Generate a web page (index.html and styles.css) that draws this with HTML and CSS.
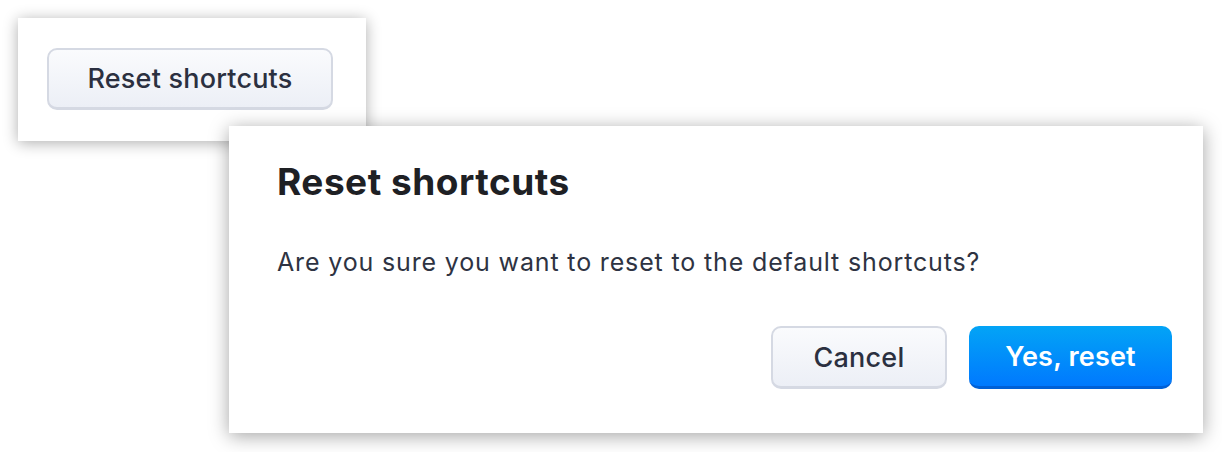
FILE: index.html
```html
<!DOCTYPE html>
<html lang="en">
<head>
    <meta charset="UTF-8">
    <title>Reset shortcuts</title>
    <link rel="stylesheet" href="styles.css">
</head>
<body>
    <!-- Carte avec le bouton -->
    <div class="card">
        <button class="btn btn-light btn-trigger">Reset shortcuts</button>
    </div>

    <!-- Boite de dialogue -->
    <div class="dialog">
        <h1 class="dialog-title">Reset shortcuts</h1>
        <p class="dialog-text">Are you sure you want to reset to the default shortcuts?</p>
        <div class="dialog-actions">
            <button class="btn btn-light btn-cancel">Cancel</button>
            <button class="btn btn-primary">Yes, reset</button>
        </div>
    </div>
</body>
</html>
```

FILE: styles.css
```css
/* Général */
body {
    margin: 0;
    background: #ffffff;
    font-family: Inter, "Open Sans", sans-serif;
    color: #2b3040;
    position: relative;
    width: 1222px;
    height: 452px;
    overflow: hidden;
}

/* Carte du haut */
.card {
    width: 348px;
    height: 123px;
    margin: 18px 0 0 18px;
    background: #ffffff;
    box-shadow: 0 2px 14px rgba(0, 0, 0, 0.32);
    box-sizing: border-box;
    padding: 30px 0 0 29px;
}

/* Boutons */
.btn {
    font-family: Inter, "Open Sans", sans-serif;
    font-size: 27px;
    font-weight: 500;
    border-radius: 10px;
    cursor: pointer;
    box-sizing: border-box;
    letter-spacing: 0.2px;
}

.btn-light {
    background: linear-gradient(#fafbfd, #eceff6);
    border: 2px solid #d5d9e3;
    border-bottom-width: 3px;
    color: #2b3040;
}

.btn-trigger {
    width: 286px;
    height: 62px;
    padding-bottom: 1px;
}

/* Dialogue */
.dialog {
    position: absolute;
    left: 229px;
    top: 126px;
    width: 974px;
    height: 307px;
    background: #ffffff;
    box-shadow: 0 3px 18px rgba(0, 0, 0, 0.36);
    box-sizing: border-box;
    padding: 33px 31px 0 48px;
}

.dialog-title {
    margin: 0;
    font-size: 37px;
    font-weight: 700;
    color: #1e2024;
    letter-spacing: 0.5px;
}

.dialog-text {
    margin: 43px 0 0;
    font-size: 25px;
    color: #2e3342;
    letter-spacing: 0.85px;
}

.dialog-actions {
    display: flex;
    justify-content: flex-end;
    gap: 22px;
    margin-top: 49px;
}

.btn-cancel {
    width: 176px;
    height: 63px;
}

.btn-primary {
    width: 203px;
    height: 63px;
    border: none;
    border-bottom: 3px solid #0060d6;
    background: linear-gradient(#03a4f6, #0079fe);
    color: #ffffff;
    font-weight: 600;
}
```
